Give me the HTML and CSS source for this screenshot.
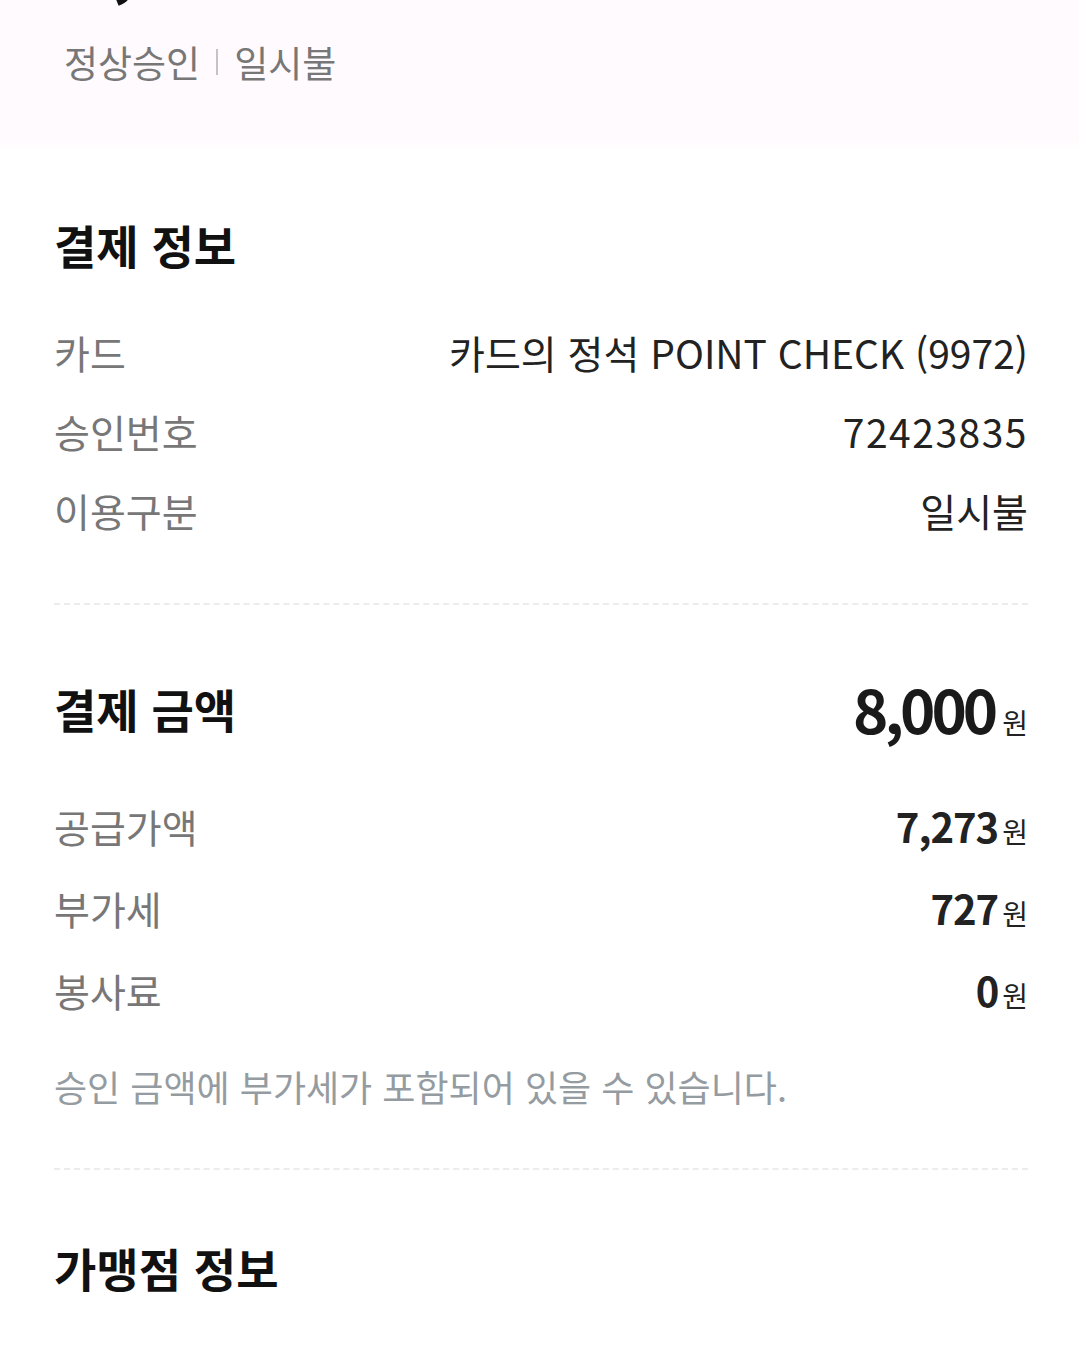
FILE: index.html
```html
<!DOCTYPE html>
<html lang="ko">
  <head>
    <meta charset="UTF-8" />
    <meta name="viewport" content="width=device-width, initial-scale=1.0" />
    <title>결제 상세</title>
    <link rel="stylesheet" href="styles.css">
  </head>
  <body>
    <div class="top">
      <div class="top-amount">8,000원</div>
      <div class="top-status">
        <span>정상승인</span>
        <span class="bar"></span>
        <span>일시불</span>
      </div>
    </div>

    <div class="content">
      <section class="section">
        <h2 class="section-title">결제 정보</h2>
        <div class="row">
          <span class="label">카드</span>
          <span class="value">카드의 정석 POINT CHECK (9972)</span>
        </div>
        <div class="row">
          <span class="label">승인번호</span>
          <span class="value num">72423835</span>
        </div>
        <div class="row">
          <span class="label">이용구분</span>
          <span class="value">일시불</span>
        </div>
      </section>

      <section class="section">
        <div class="section-head">
          <h2 class="section-title">결제 금액</h2>
          <span class="total"><b>8,000</b><small>원</small></span>
        </div>
        <div class="row money">
          <span class="label">공급가액</span>
          <span class="amount"><b>7,273</b><small>원</small></span>
        </div>
        <div class="row money">
          <span class="label">부가세</span>
          <span class="amount"><b>727</b><small>원</small></span>
        </div>
        <div class="row money">
          <span class="label">봉사료</span>
          <span class="amount"><b>0</b><small>원</small></span>
        </div>
        <p class="note">승인 금액에 부가세가 포함되어 있을 수 있습니다.</p>
      </section>

      <section class="section last">
        <h2 class="section-title">가맹점 정보</h2>
      </section>
    </div>
  </body>
</html>
```

FILE: styles.css
```css
body {
  margin: 0;
  font-family: "Noto Sans CJK KR", "Noto Sans", sans-serif;
  background-color: #fff;
  color: #222;
  overflow: hidden;
}
.top {
  display: flow-root;
  background: linear-gradient(#fffafd 0, #fffafd 138px, #fff 152px);
  padding: 0 0 66px 72px;
}
.top-amount {
  font-size: 72px;
  font-weight: 700;
  line-height: 72px;
  margin-top: -77px;
  color: #111;
  letter-spacing: -2px;
}
.top-status {
  display: flex;
  align-items: center;
  gap: 16px;
  font-size: 37px;
  color: #777;
  line-height: 44px;
  margin-top: 45px;
  margin-left: -8px;
}
.bar {
  width: 2px;
  height: 26px;
  background-color: #c4c4c4;
}
.content {
  padding: 0 51px 0 54px;
}
.section {
  border-bottom: 2px dashed #ececec;
  padding: 64px 0 54px;
}
.section + .section {
  padding-top: 59px;
  padding-bottom: 57px;
}
.section.last {
  border-bottom: none;
  padding-top: 67px;
}
.section-title {
  margin: 0;
  font-size: 46px;
  font-weight: 700;
  line-height: 60px;
  color: #111;
}
.section-head {
  display: flex;
  justify-content: space-between;
  align-items: center;
}
.row {
  display: flex;
  justify-content: space-between;
  align-items: center;
  height: 79px;
  font-size: 39px;
}
.section-title + .row {
  margin-top: 38px;
}
.label {
  color: #777;
}
.value {
  color: #222;
}
.value.num {
  letter-spacing: 1.5px;
}
.total b {
  font-size: 60px;
  font-weight: 700;
  letter-spacing: -4px;
  color: #1a1a1a;
}
.total small {
  font-size: 28px;
  margin-left: 8px;
  color: #222;
}
.row.money {
  height: 82px;
}
.section-head + .row {
  margin-top: 34px;
}
.amount b {
  font-size: 40px;
  font-weight: 700;
  letter-spacing: -1px;
  color: #222;
}
.amount small {
  font-size: 28px;
  margin-left: 4px;
  color: #222;
}
.note {
  margin: 30px 0 0;
  font-size: 36px;
  color: #959ca1;
  line-height: 50px;
}
```
